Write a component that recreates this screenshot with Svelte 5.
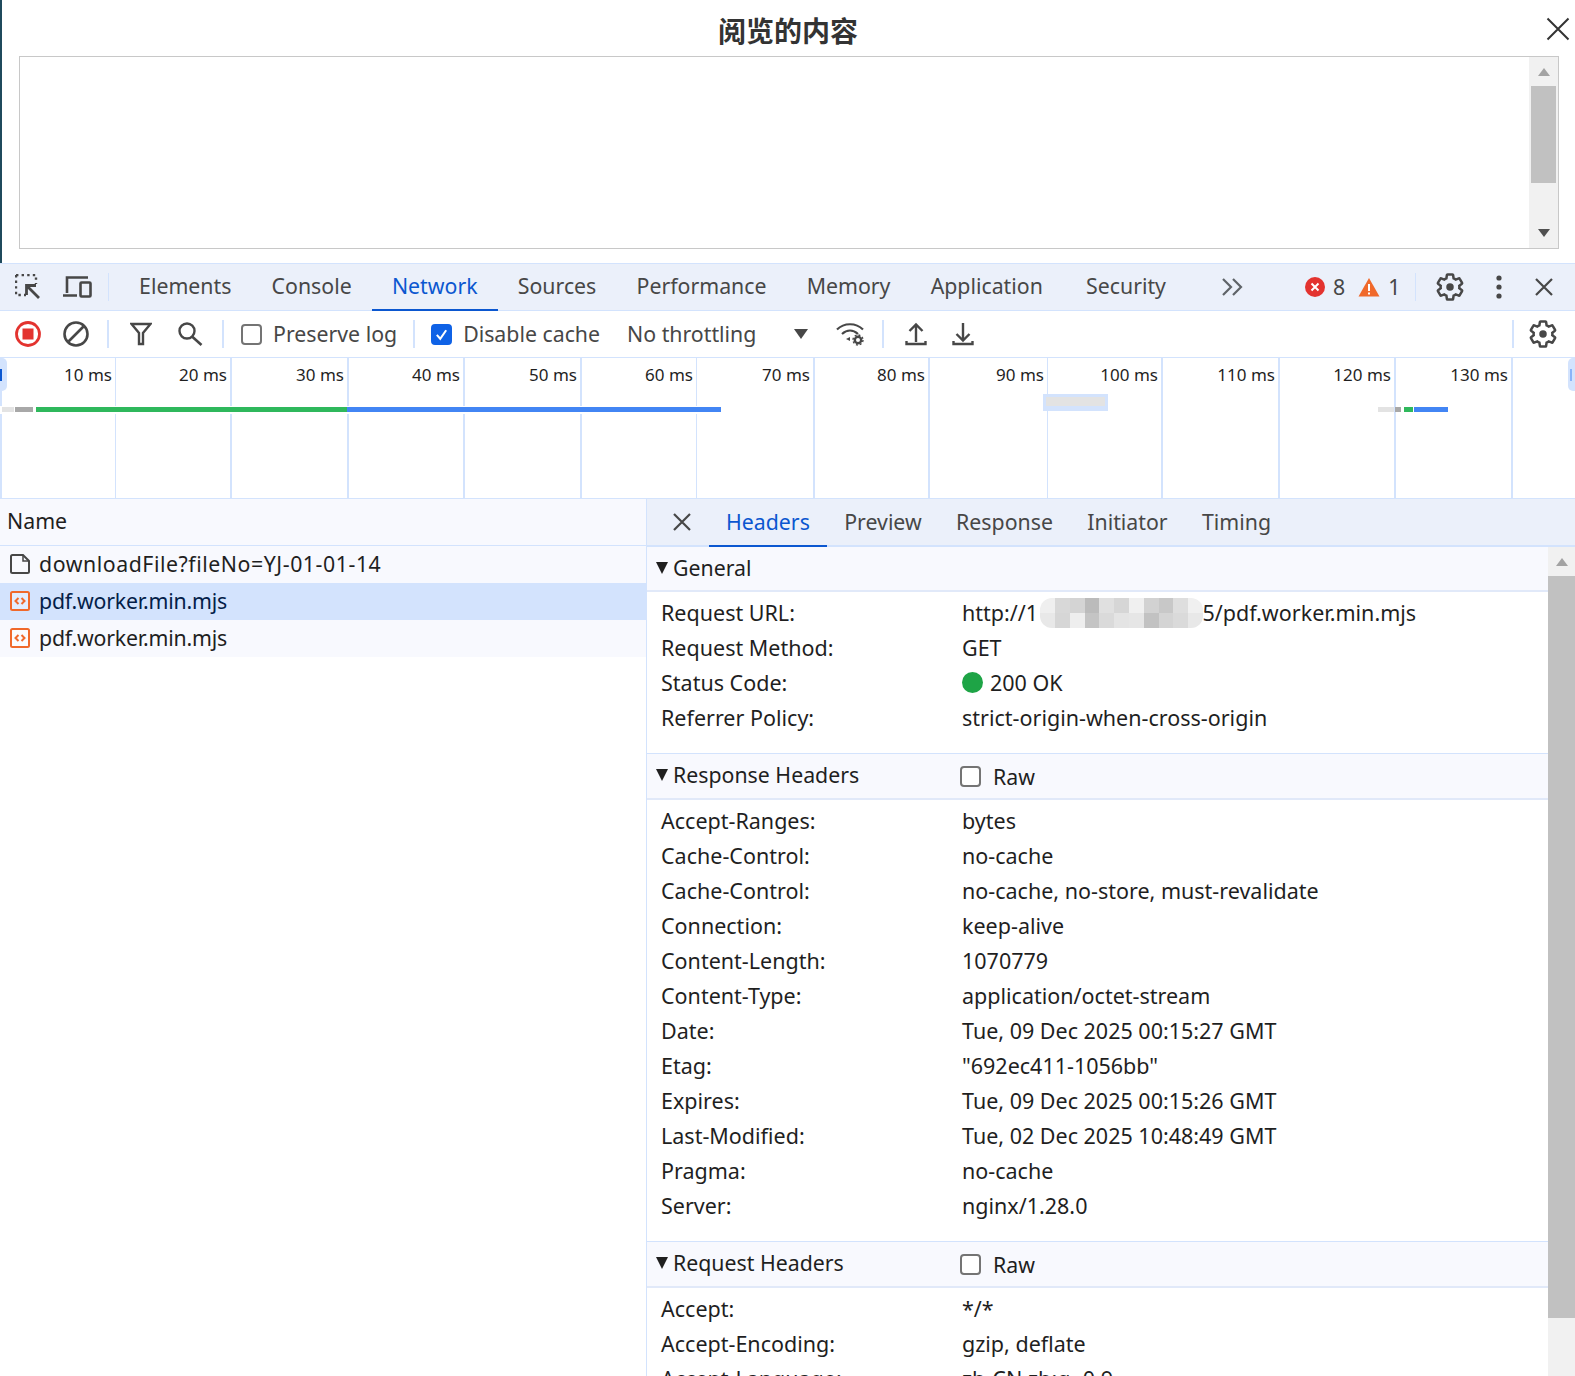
<script>
  const tabs = ['Elements', 'Console', 'Network', 'Sources', 'Performance', 'Memory', 'Application', 'Security'];
  const detailTabs = ['Headers', 'Preview', 'Response', 'Initiator', 'Timing'];
  const ticks = [
    { w: 116, t: '10 ms', thin: true }, { w: 116, t: '20 ms' }, { w: 117, t: '30 ms' }, { w: 116, t: '40 ms' },
    { w: 117, t: '50 ms' }, { w: 115, t: '60 ms', thin: true }, { w: 118, t: '70 ms' }, { w: 115, t: '80 ms' },
    { w: 118, t: '90 ms', thin: true }, { w: 115, t: '100 ms' }, { w: 117, t: '110 ms' }, { w: 116, t: '120 ms' },
    { w: 117, t: '130 ms' }
  ];
  const bars = [
    { x: 2, w: 12, c: '#e3e3e3' }, { x: 15, w: 18, c: '#a8a8a8' }, { x: 36, w: 311, c: '#2fb85c' }, { x: 347, w: 374, c: '#4285f4' },
    { x: 1378, w: 16, c: '#e3e3e3' }, { x: 1395, w: 6, c: '#a8a8a8' }, { x: 1404, w: 9, c: '#2fb85c' }, { x: 1414, w: 34, c: '#4285f4' }
  ];
  const general = [
    ['Request Method:', 'GET']
  ];
  const policy = ['Referrer Policy:', 'strict-origin-when-cross-origin'];
  const response = [
    ['Accept-Ranges:', 'bytes'], ['Cache-Control:', 'no-cache'], ['Cache-Control:', 'no-cache, no-store, must-revalidate'],
    ['Connection:', 'keep-alive'], ['Content-Length:', '1070779'], ['Content-Type:', 'application/octet-stream'],
    ['Date:', 'Tue, 09 Dec 2025 00:15:27 GMT'], ['Etag:', '"692ec411-1056bb"'], ['Expires:', 'Tue, 09 Dec 2025 00:15:26 GMT'],
    ['Last-Modified:', 'Tue, 02 Dec 2025 10:48:49 GMT'], ['Pragma:', 'no-cache'], ['Server:', 'nginx/1.28.0']
  ];
  const request = [['Accept:', '*/*'], ['Accept-Encoding:', 'gzip, deflate'], ['Accept-Language:', 'zh-CN,zh;q=0.9']];
  const mosaic = [
    ['#efefef','#d8d8d8','#d4d4d4','#bbbbbb','#e0e0e0','#d6d6d6','#f0f0f0','#d2d2d2','#c8c8c8','#dedede','#f0f0f0'],
    ['#e8e8e8','#d6d6d6','#eeeeee','#c4c4c4','#dadada','#e4e4e4','#e6e6e6','#c2c2c2','#d4d4d4','#dadada','#e8e8e8']
  ];
  const gear = 'M19.43 12.98c.04-.32.07-.64.07-.98s-.03-.66-.07-.98l2.11-1.65c.19-.15.24-.42.12-.64l-2-3.46c-.12-.22-.39-.3-.61-.22l-2.49 1c-.52-.4-1.08-.73-1.69-.98l-.38-2.65C14.46 2.18 14.25 2 14 2h-4c-.25 0-.46.18-.49.42l-.38 2.65c-.61.25-1.17.59-1.69.98l-2.49-1c-.23-.09-.49 0-.61.22l-2 3.46c-.13.22-.07.49.12.64l2.11 1.65c-.04.32-.07.65-.07.98s.03.66.07.98l-2.11 1.65c-.19.15-.24.42-.12.64l2 3.46c.12.22.39.3.61.22l2.49-1c.52.4 1.08.73 1.69.98l.38 2.65c.03.24.24.42.49.42h4c.25 0 .46-.18.49-.42l.38-2.65c.61-.25 1.17-.59 1.69-.98l2.49 1c.23.09.49 0 .61-.22l2-3.46c.12-.22.07-.49-.12-.64l-2.11-1.65z';
</script>

{#snippet gearIcon()}
  <svg class="gear" viewBox="0 0 24 24"><path d={gear} fill="none" stroke="#474747" stroke-width="2"/><circle cx="12" cy="12" r="3" fill="#474747"/></svg>
{/snippet}

{#snippet jsIcon()}
  <svg class="ficon" viewBox="0 0 20 20"><rect x="1" y="1" width="18" height="18" rx="1.5" fill="#fff" fill-opacity=".35" stroke="#f0692b" stroke-width="2"/><path d="M8.500 7 5.500 10l3 3M11.500 7l3 3-3 3" fill="none" stroke="#f0692b" stroke-width="2"/></svg>
{/snippet}

{#snippet sectionHead(title, raw)}
  <div class="shead">
    <span class="tri"></span><span class="stitle">{title}</span>
    {#if raw}<span class="raw"><span class="cb"></span><span>Raw</span></span>{/if}
  </div>
{/snippet}

<div class="page">
  <section class="modal">
    <header class="mhead">
      <h1>阅览的内容</h1>
      <svg class="mclose" viewBox="0 0 24 24"><path d="M1.500 1.500 22.500 22.500M22.500 1.500 1.500 22.500" stroke="#333" stroke-width="2"/></svg>
    </header>
    <div class="area">
      <div class="ascroll">
        <span class="up"></span>
        <span class="thumb"></span>
        <span class="down"></span>
      </div>
    </div>
  </section>

  <nav class="bar main">
    <svg class="ic ins" viewBox="0 0 26 26"><path d="M1 1h20v9M1 1v20h10" fill="none" stroke="#474747" stroke-width="2.400" stroke-dasharray="2.400 3.200"/><path d="M24 24 11.500 11.500M11.500 21V11.500H21" fill="none" stroke="#474747" stroke-width="2.800"/></svg>
    <svg class="ic dev" viewBox="0 0 30 24"><path d="M5 18V2.500h21M1 20.500h14" fill="none" stroke="#474747" stroke-width="2.600"/><rect x="18.500" y="7.500" width="10" height="14" rx="1" fill="none" stroke="#474747" stroke-width="2.600"/></svg>
    <span class="sep tsep"></span>
    <div class="tabs">
      {#each tabs as t}
        <span class="tab" class:on={t === 'Network'}>{t}</span>
      {/each}
    </div>
    <svg class="more" viewBox="0 0 22 20"><path d="M2 2l8 8-8 8M12 2l8 8-8 8" fill="none" stroke="#5f6368" stroke-width="2.200"/></svg>
    <div class="counts">
      <svg class="err" viewBox="0 0 20 20"><circle cx="10" cy="10" r="10" fill="#e3332f"/><path d="M6.500 6.500l7 7M13.500 6.500l-7 7" stroke="#fff" stroke-width="2"/></svg>
      <span class="n">8</span>
      <svg class="warn" viewBox="0 0 22 20"><path d="M11 1 21.500 19.500H.5z" fill="#f0692b"/><path d="M11 7v7M11 15.500v2" stroke="#fff" stroke-width="2"/></svg>
      <span class="n">1</span>
    </div>
    <span class="sep rsep"></span>
    <span class="g1">{@render gearIcon()}</span>
    <svg class="dots" viewBox="0 0 6 24"><circle cx="3" cy="3" r="2.600" fill="#474747"/><circle cx="3" cy="12" r="2.600" fill="#474747"/><circle cx="3" cy="21" r="2.600" fill="#474747"/></svg>
    <svg class="x" viewBox="0 0 18 18"><path d="M1 1l16 16M17 1 1 17" stroke="#474747" stroke-width="2.200"/></svg>
  </nav>

  <div class="bar tools">
    <svg class="ic26 rec" viewBox="0 0 26 26"><circle cx="13" cy="13" r="11.500" fill="none" stroke="#e3332f" stroke-width="2.800"/><rect x="7.500" y="7.500" width="11" height="11" fill="#e3332f"/></svg>
    <svg class="ic26 clr" viewBox="0 0 26 26"><circle cx="13" cy="13" r="11.500" fill="none" stroke="#474747" stroke-width="2.600"/><path d="M20.500 5.500 5.500 20.500" stroke="#474747" stroke-width="2.600"/></svg>
    <span class="sep s1"></span>
    <svg class="fil" viewBox="0 0 22 24"><path d="M1.500 2h19L13 11v11h-4V11z" fill="none" stroke="#474747" stroke-width="2.400"/></svg>
    <svg class="sea" viewBox="0 0 26 24"><circle cx="10" cy="9" r="7.500" fill="none" stroke="#474747" stroke-width="2.400"/><path d="M15 14.500 24.500 23" stroke="#474747" stroke-width="2.600"/></svg>
    <span class="sep s2"></span>
    <span class="cb c1"></span><span class="lbl l1">Preserve log</span>
    <span class="sep s3"></span>
    <span class="cb on c2"><svg viewBox="0 0 20 20"><path d="M4.500 10.500 8.500 15 15.500 5" fill="none" stroke="#fff" stroke-width="2.400"/></svg></span><span class="lbl l2">Disable cache</span>
    <span class="lbl l3">No throttling</span>
    <span class="caret"></span>
    <svg class="wifi" viewBox="0 0 30 24"><path d="M2 7.500C9 .5 21 .5 28 7.500M7 12c5-4.500 11-4.500 16 0" fill="none" stroke="#474747" stroke-width="2.200"/><path d="M11 17l4-2v4z" fill="#474747"/><circle cx="23" cy="18" r="3.200" fill="none" stroke="#474747" stroke-width="2.400"/><circle cx="23" cy="18" r="5" fill="none" stroke="#474747" stroke-width="1.400" stroke-dasharray="2 1.900"/></svg>
    <span class="sep s4"></span>
    <svg class="ud u" viewBox="0 0 22 24"><path d="M11 20V3M4.500 9 11 2.500 17.500 9M1.500 19v3h19v-3" fill="none" stroke="#474747" stroke-width="2.400"/></svg>
    <svg class="ud d" viewBox="0 0 22 24"><path d="M11 1v17M4.500 12 11 18.500 17.500 12M1.500 19v3h19v-3" fill="none" stroke="#474747" stroke-width="2.400"/></svg>
    <span class="sep s5"></span>
    <span class="g2">{@render gearIcon()}</span>
  </div>

  <div class="overview">
    <div class="ticks">
      {#each ticks as k}
        <div class="tick" class:thin={k.thin} style="width:{k.w}px">{k.t}</div>
      {/each}
    </div>
    <span class="handle hl"><i></i></span>
    <span class="handle hr"><i></i></span>
    <span class="gap"></span>
    {#each bars as b}
      <span class="wbar" style="left:{b.x}px;width:{b.w}px;background:{b.c}"></span>
    {/each}
    <span class="pick"><i></i></span>
  </div>

  <div class="split">
    <aside class="list">
      <div class="lhead">Name</div>
      <div class="row">
        <svg class="ficon" viewBox="0 0 20 20"><path d="M1 2.500Q1 1 2.500 1H13l6 6v10.500q0 1.500-1.500 1.500h-15Q1 19 1 17.500z" fill="none" stroke="#474747" stroke-width="2"/><path d="M13 1v6h6" fill="none" stroke="#474747" stroke-width="1.500"/></svg>
        <span class="dl">downloadFile?fileNo=YJ-01-01-14</span>
      </div>
      <div class="row sel">{@render jsIcon()}<span>pdf.worker.min.mjs</span></div>
      <div class="row">{@render jsIcon()}<span>pdf.worker.min.mjs</span></div>
    </aside>

    <section class="detail">
      <div class="dtabs">
        <svg class="dx" viewBox="0 0 18 18"><path d="M1 1l16 16M17 1 1 17" stroke="#474747" stroke-width="2.200"/></svg>
        {#each detailTabs as t}
          <span class="dtab" class:on={t === 'Headers'}>{t}</span>
        {/each}
      </div>
      <div class="dbody">
        <div class="content">
          {@render sectionHead('General', false)}
          <div class="kv">
            <div class="kvrow">
              <span>Request URL:</span>
              <span class="url">http://1<span class="mosaic">{#each mosaic as r}<span class="mrow">{#each r as c}<i style="background:{c}"></i>{/each}</span>{/each}</span><span class="urlend">25/pdf.worker.min.mjs</span></span>
            </div>
            {#each general as [k, v]}
              <div class="kvrow"><span>{k}</span><span>{v}</span></div>
            {/each}
            <div class="kvrow"><span>Status Code:</span><span class="status"><i></i>200 OK</span></div>
            <div class="kvrow"><span>{policy[0]}</span><span>{policy[1]}</span></div>
          </div>
          {@render sectionHead('Response Headers', true)}
          <div class="kv">
            {#each response as [k, v]}
              <div class="kvrow"><span>{k}</span><span>{v}</span></div>
            {/each}
          </div>
          {@render sectionHead('Request Headers', true)}
          <div class="kv">
            {#each request as [k, v]}
              <div class="kvrow"><span>{k}</span><span>{v}</span></div>
            {/each}
          </div>
        </div>
        <div class="dscroll"><span class="up"></span><span class="dthumb"></span></div>
      </div>
    </section>
  </div>
</div>

<style>
  :global(body) { margin: 0; background: #fff; }
  .page { width: 1575px; height: 1376px; overflow: hidden; display: flex; flex-direction: column; font-family: "Noto Sans", "Noto Sans CJK SC", sans-serif; font-size: 21.300px; line-height: 30px; color: #1f1f1f; background: #fff; }

  .modal { height: 263px; flex: none; box-sizing: border-box; border-left: 2px solid #1f4a5c; padding-left: 17px; }
  .mhead { height: 56px; width: 1538px; display: flex; align-items: center; justify-content: center; position: relative; }
  h1 { margin: 0 0 -4px 0; font: 700 28px/1 "Noto Sans CJK SC", sans-serif; color: #333; }
  .mclose { position: absolute; right: -13px; top: 17px; width: 24px; height: 24px; }
  .area { width: 1540px; height: 193px; box-sizing: border-box; border: 1px solid #c8c8c8; display: flex; justify-content: flex-end; }
  .ascroll { width: 29px; background: #f1f1f1; display: flex; flex-direction: column; align-items: center; padding-top: 11px; box-sizing: border-box; }
  .up { width: 0; height: 0; border: 6.500px solid transparent; border-top: 0; border-bottom: 8px solid #a3a3a3; display: block; flex: none; }
  .down { width: 0; height: 0; border: 6.500px solid transparent; border-bottom: 0; border-top: 8px solid #505050; display: block; margin-top: 46px; }
  .thumb { width: 25px; height: 97px; margin-top: 10px; background: #c1c1c1; flex: none; }

  .bar { display: flex; align-items: center; flex: none; box-sizing: border-box; color: #474747; }
  .main { height: 48px; background: #ebf0fa; border-top: 1px solid #d3e3fd; border-bottom: 1px solid #d3e3fd; }
  .tools { height: 47px; background: #fff; border-bottom: 1px solid #d3e3fd; }
  .sep { width: 1px; height: 28px; background: #d3e3fd; flex: none; }
  .tools .sep { width: 2px; }
  .ic { flex: none; }
  .ins { width: 26px; height: 26px; margin-left: 15px; }
  .dev { width: 30px; height: 24px; margin-left: 21px; }
  .tsep { margin-left: 16px; }
  .tabs { display: flex; align-self: stretch; margin-left: 10px; }
  .tab { padding: 0 20.100px 1px; display: flex; align-items: center; margin-bottom: -1px; border-bottom: 2px solid transparent; box-sizing: border-box; }
  .tab.on { color: #0b57d0; border-bottom-color: #0b57d0; }
  .tab:last-child { margin-left: 3px; }
  .more { width: 22px; height: 20px; margin-left: 35px; flex: none; }
  .counts { display: flex; align-items: center; margin-left: 62px; }
  .err { width: 20px; height: 20px; }
  .n { margin-left: 8px; }
  .warn { width: 22px; height: 20px; margin-left: 13px; }
  .rsep { margin-left: 15px; }
  .g1 { margin-left: 19px; display: flex; }
  .gear { width: 30px; height: 30px; }
  .dots { width: 6px; height: 24px; margin-left: 31px; flex: none; }
  .x { width: 18px; height: 18px; margin-left: 33px; flex: none; }

  .ic26 { width: 26px; height: 26px; flex: none; }
  .rec { margin-left: 15px; }
  .clr { margin-left: 22px; }
  .s1 { margin-left: 18px; }
  .fil { width: 22px; height: 24px; margin-left: 21px; flex: none; }
  .sea { width: 26px; height: 24px; margin-left: 25px; flex: none; }
  .s2 { margin-left: 19px; }
  .cb { width: 21px; height: 21px; box-sizing: border-box; border: 2px solid #747474; border-radius: 4px; background: #fff; flex: none; display: block; }
  .cb.on { background: #0f62e6; border-color: #0f62e6; }
  .cb.on svg { display: block; width: 100%; height: 100%; }
  .c1 { margin-left: 17px; }
  .l1 { margin-left: 11px; }
  .s3 { margin-left: 16px; }
  .c2 { margin-left: 16px; }
  .l2 { margin-left: 11px; }
  .l3 { margin-left: 27px; }
  .caret { width: 0; height: 0; border: 7px solid transparent; border-bottom: 0; border-top: 10px solid #474747; margin-left: 38px; flex: none; }
  .wifi { width: 30px; height: 24px; margin-left: 27px; flex: none; }
  .s4 { margin-left: 17px; }
  .ud { width: 22px; height: 24px; flex: none; }
  .u { margin-left: 21px; }
  .d { margin-left: 25px; }
  .s5 { margin-left: 538px; }
  .g2 { margin-left: 14px; display: flex; }

  .overview { height: 141px; flex: none; position: relative; border-bottom: 1px solid #d3e3fd; box-sizing: border-box; overflow: hidden; }
  .ticks { display: flex; height: 100%; border-left: 2px solid #d3e3fd; width: 1575px; box-sizing: border-box; }
  .tick { flex: none; box-sizing: border-box; border-right: 2px solid #d3e3fd; text-align: right; padding: 3px 3px 0 0; font-size: 17px; line-height: 28px; color: #1f1f1f; }
  .tick:first-child { margin-left: -2px; }
  .tick.thin { border-right-width: 1px; }
  .handle { position: absolute; top: 0; width: 7px; height: 33px; background: #d3e3fd; border-radius: 0 5px 5px 0; }
  .handle i { position: absolute; left: 0; top: 11px; width: 2px; height: 12px; background: #0b57d0; display: block; }
  .hl { left: 0; }
  .hr { right: 0; border-radius: 5px 0 0 5px; }
  .hr i { left: 2px; top: 11px; background: #8ab4f8; }
  .gap { position: absolute; left: 0; top: 48px; width: 722px; height: 8px; background: #fff; }
  .wbar { position: absolute; top: 49px; height: 5px; }
  .pick { position: absolute; left: 1043px; top: 36px; width: 65px; height: 17px; background: #d3e3fd; }
  .pick i { display: block; margin: 3px 3px 0; height: 9px; background: #e3e3e3; }

  .split { flex: 1; display: flex; min-height: 0; }
  .list { width: 646px; flex: none; }
  .lhead { height: 47px; background: #f8f9fe; border-bottom: 1px solid #d3e3fd; box-sizing: border-box; padding: 0 0 2px 7px; display: flex; align-items: center; }
  .row { height: 37px; box-sizing: border-box; background: #f8f9fe; display: flex; align-items: center; padding: 0 0 1px 10px; }
  .row > span { margin-left: 9px; letter-spacing: -.2px; }
  .row > .dl { letter-spacing: .55px; }
  .row.sel { background: #d3e3fd; color: #041e49; }
  .ficon { width: 20px; height: 20px; flex: none; }

  .detail { flex: 1; display: flex; flex-direction: column; border-left: 1px solid #d3e3fd; min-width: 0; }
  .dtabs { height: 48px; flex: none; box-sizing: border-box; background: #ebf0fa; border-bottom: 2px solid #d3e3fd; display: flex; color: #474747; }
  .dx { width: 18px; height: 18px; align-self: center; margin-left: 26px; margin-right: 17.800px; }
  .dtab { padding: 0 17.200px; display: flex; align-items: center; border-bottom: 2px solid transparent; margin-bottom: -2px; }
  .dtab.on { color: #0b57d0; border-bottom-color: #0b57d0; }

  .dbody { flex: 1; display: flex; min-height: 0; }
  .content { flex: 1; min-width: 0; }
  .shead { height: 47px; box-sizing: border-box; background: #f8f9fe; border-top: 1px solid #d3e3fd; border-bottom: 2px solid #e1e9f9; display: flex; align-items: center; padding: 0 0 2px 9px; }
  .content > .shead:first-child { border-top: 0; height: 45px; }
  .tri { width: 0; height: 0; border: 6.500px solid transparent; border-bottom: 0; border-top: 12px solid #1f1f1f; margin-right: 5px; flex: none; }
  .stitle { width: 287px; flex: none; }
  .raw { display: flex; align-items: center; margin-top: 3px; }
  .raw > span:last-child { margin-left: 12px; }
  .kv { padding: 3px 0 18px 14px; font-size: 21.500px; }
  .kvrow { height: 35px; display: grid; grid-template-columns: 301px 1fr; align-items: center; white-space: nowrap; }
  .url { display: flex; align-items: center; }
  .mosaic { width: 163px; display: block; flex: none; margin-left: 2px; border-radius: 12px; overflow: hidden; position: relative; z-index: 1; }
  .urlend { margin-left: -13px; }
  .mrow { display: flex; height: 15px; }
  .mrow i { flex: 1; display: block; }
  .status { display: flex; align-items: center; }
  .status i { width: 21px; height: 21px; border-radius: 50%; background: #1ea446; margin-right: 7px; display: block; }
  .dscroll { width: 27px; flex: none; background: #f1f1f1; display: flex; flex-direction: column; align-items: center; padding-top: 11px; box-sizing: border-box; }
  .dthumb { width: 27px; height: 742px; margin-top: 10px; background: #c1c1c1; flex: none; }
</style>
